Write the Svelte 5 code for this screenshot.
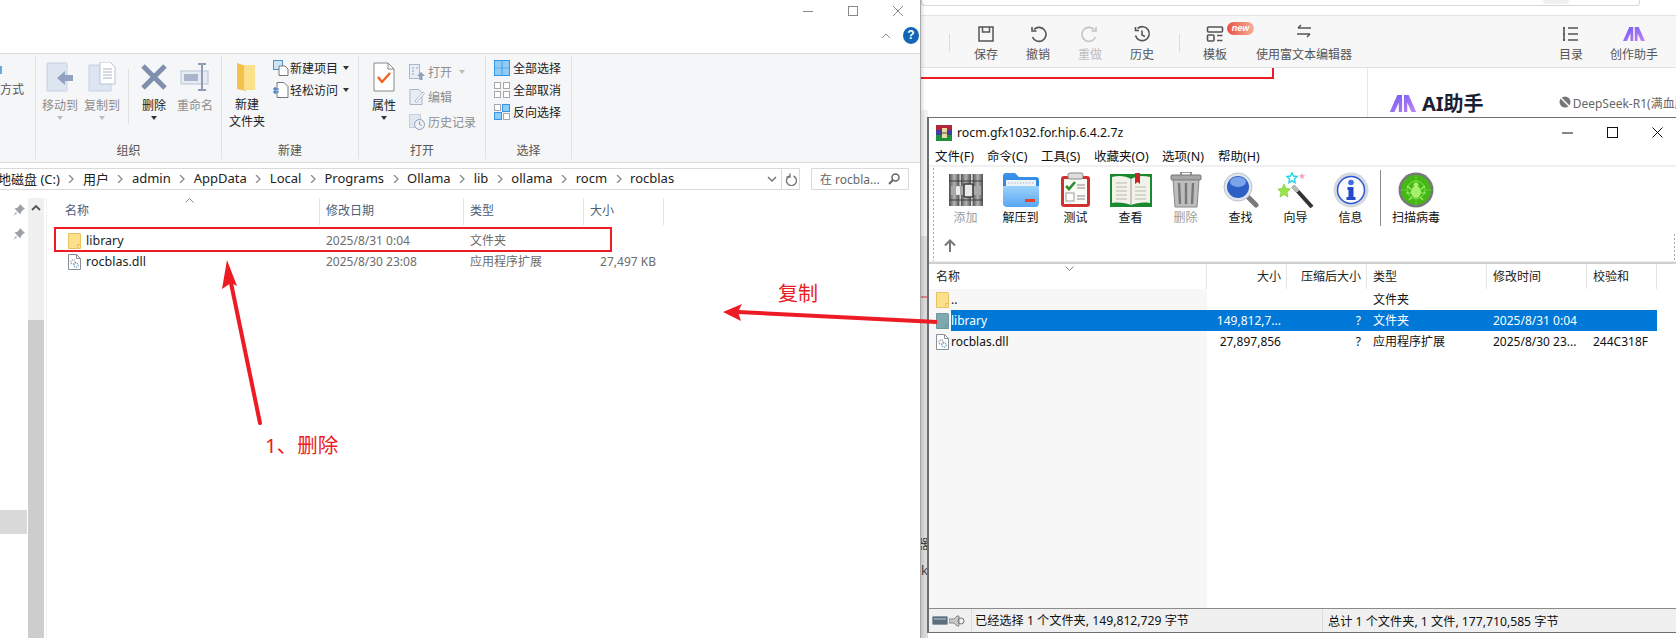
<script lang="ts">
	// Two windows over a markdown editor, with red annotation arrows on top.
	const crumbs = ['本地磁盘 (C:)', '用户', 'admin', 'AppData', 'Local', 'Programs', 'Ollama', 'lib', 'ollama', 'rocm', 'rocblas'];

	const listCols = ['名称', '修改日期', '类型', '大小'];
	const listRows = [
		{ name: 'library', date: '2025/8/31 0:04', type: '文件夹', size: '', kind: 'folder' },
		{ name: 'rocblas.dll', date: '2025/8/30 23:08', type: '应用程序扩展', size: '27,497 KB', kind: 'dll' }
	];

	const rarTools = [
		{ label: '添加', icon: 'add', off: true },
		{ label: '解压到', icon: 'extract' },
		{ label: '测试', icon: 'test' },
		{ label: '查看', icon: 'view' },
		{ label: '删除', icon: 'trash', off: true },
		{ label: '查找', icon: 'find' },
		{ label: '向导', icon: 'wizard' },
		{ label: '信息', icon: 'info' }
	];
	const rarMenu = ['文件(F)', '命令(C)', '工具(S)', '收藏夹(O)', '选项(N)', '帮助(H)'];
	const rarRows = [
		{ name: '..', size: '', packed: '', type: '文件夹', date: '', crc: '', kind: 'folder' },
		{ name: 'library', size: '149,812,7...', packed: '?', type: '文件夹', date: '2025/8/31 0:04', crc: '', kind: 'folder', selected: true },
		{ name: 'rocblas.dll', size: '27,897,856', packed: '?', type: '应用程序扩展', date: '2025/8/30 23...', crc: '244C318F', kind: 'dll' }
	];
</script>

{#snippet folderIcon(tint = false)}
	<svg class="file-ico" viewBox="0 0 13 16" width="13" height="16">
		<path d="M.5.5h11a1 1 0 0 1 1 1v14H.5z" fill={tint ? '#7fa9b0' : '#fde08c'} stroke={tint ? '#6d99a0' : '#e6c35f'} />
		<path d="M9.5 15.5v-4h3" fill="none" stroke={tint ? '#6d99a0' : '#e6c35f'} />
	</svg>
{/snippet}

{#snippet dllIcon()}
	<svg class="file-ico" viewBox="0 0 13 16" width="13" height="16">
		<path d="M.5.5h8l4 4v11H.5z" fill="#fff" stroke="#8a8f96" />
		<path d="M8.5.5v4h4" fill="none" stroke="#8a8f96" />
		<circle cx="5" cy="8" r="2.2" fill="none" stroke="#8c96a3" stroke-width="1.2" stroke-dasharray="1.2 .8" />
		<circle cx="8" cy="11" r="2.2" fill="none" stroke="#6f9fc9" stroke-width="1.2" stroke-dasharray="1.2 .8" />
	</svg>
{/snippet}

{#snippet aiMark(w, h, id)}
	<svg viewBox="0 0 28 18" width={w} height={h}>
		<defs>
			<linearGradient id={id} x1="0" y1="0" x2="1" y2="1"><stop offset="0" stop-color="#6f5cf2" /><stop offset="1" stop-color="#c284f6" /></linearGradient>
		</defs>
		<path d="M0 18L8 0h5v18H9.500V8L5 18zM28 18L20 0h-5v18h3.500V8L23 18z" fill="url(#{id})" />
	</svg>
{/snippet}

{#snippet rarIcon(name)}
	{#if name === 'add'}
		<svg viewBox="0 0 36 36" width="36" height="36">
			<defs>
				<linearGradient id="bar-grey" x1="0" y1="0" x2="1" y2="0"><stop offset="0" stop-color="#4f4f4f" /><stop offset=".5" stop-color="#b4b4b4" /><stop offset="1" stop-color="#4f4f4f" /></linearGradient>
			</defs>
			<rect x="1" y="2" width="10.500" height="32" fill="url(#bar-grey)" />
			<rect x="12.700" y="2" width="10.500" height="32" fill="url(#bar-grey)" />
			<rect x="24.500" y="2" width="10.500" height="32" fill="url(#bar-grey)" />
			<path d="M1 9h34M1 28h34" stroke="#3c3c3c" stroke-width="1.200" />
			<rect x="3" y="14" width="30" height="9" fill="#a9a9a9" />
			<rect x="16" y="12" width="9" height="13" rx="1" fill="#e9e9e9" stroke="#3f3f3f" stroke-width="1.600" />
			<rect x="8" y="14" width="4" height="9" rx="1.500" fill="#eee" />
		</svg>
	{:else if name === 'extract'}
		<svg viewBox="0 0 36 36" width="36" height="36">
			<defs>
				<linearGradient id="fold-back" x1="0" y1="0" x2="0" y2="1"><stop offset="0" stop-color="#3d94ea" /><stop offset="1" stop-color="#1c6fd0" /></linearGradient>
				<linearGradient id="fold-front" x1="0" y1="0" x2="0" y2="1"><stop offset="0" stop-color="#9cd2fb" /><stop offset="1" stop-color="#58a6f3" /></linearGradient>
			</defs>
			<path d="M0 4a3 3 0 0 1 3-3h9l4 4h17a3 3 0 0 1 3 3v24H0z" fill="url(#fold-back)" />
			<rect x="3" y="8" width="30" height="8" fill="#eef3f8" />
			<path d="M5 11h26" stroke="#a7b9cc" stroke-dasharray="1.5 1.5" />
			<path d="M0 14h36v17a4 4 0 0 1-4 4H4a4 4 0 0 1-4-4z" fill="url(#fold-front)" />
			<rect x="22" y="27" width="10" height="3" fill="#e8402f" />
		</svg>
	{:else if name === 'test'}
		<svg viewBox="0 0 36 36" width="36" height="36">
			<rect x="3" y="4" width="29" height="31" rx="3" fill="#d32f2f" />
			<rect x="6" y="7" width="23" height="25" fill="#fbfbf6" />
			<rect x="10" y="1" width="15" height="6" rx="2" fill="#ddd" stroke="#888" />
			<path d="M8 14l3 3 6-7" fill="none" stroke="#2e8b2e" stroke-width="2.6" />
			<path d="M19 13h8M19 16h8M19 24h8M19 27h8" stroke="#888" />
			<rect x="8" y="21" width="8" height="8" fill="#fff" stroke="#999" />
		</svg>
	{:else if name === 'view'}
		<svg viewBox="0 0 42 36" width="42" height="36">
			<rect x="0" y="2" width="42" height="33" fill="#1a8a2e" />
			<path d="M2 5c7-2 14-1 19 2 5-3 12-4 19-2v26c-7-1-14 0-19 2-5-2-12-3-19-2z" fill="#f2f2ea" />
			<path d="M21 7v26" stroke="#999" />
			<path d="M6 11h11M6 15h11M6 19h11M6 23h11M6 27h11M25 15h11M25 19h11M25 23h11M25 27h11" stroke="#b8b8b0" />
			<path d="M25 1h5v11l-2.500-2-2.500 2z" fill="#c8242b" />
		</svg>
	{:else if name === 'trash'}
		<svg viewBox="0 0 32 36" width="32" height="36">
			<rect x="11" y="0" width="10" height="4" fill="none" stroke="#777" stroke-width="1.500" />
			<rect x="1" y="3" width="30" height="5" rx="1" fill="#a6a6a6" stroke="#777" />
			<path d="M3 8h26l-2 27H5z" fill="#bdbdbd" stroke="#888" />
			<path d="M9 11l1 21M16 11v21M23 11l-1 21" stroke="#777" stroke-width="2.400" />
		</svg>
	{:else if name === 'find'}
		<svg viewBox="0 0 36 36" width="36" height="36">
			<path d="M23 23l10 10" stroke="#7a7a7a" stroke-width="5" stroke-linecap="round" />
			<circle cx="15" cy="15" r="14" fill="#dfe6ee" stroke="#b9c3cf" />
			<circle cx="15" cy="15" r="11" fill="#2d5fc4" />
			<ellipse cx="15" cy="10" rx="8" ry="5" fill="#7da3ea" />
		</svg>
	{:else if name === 'wizard'}
		<svg viewBox="0 0 36 36" width="36" height="36">
			<path d="M15 14l19 21" stroke="#333" stroke-width="4" />
			<path d="M15 14l5 5.500" stroke="#bbb" stroke-width="4" />
			<path d="M6 12l2 4.500 4.500.5-3.500 3 1 5-4-2.500-4 2.500 1-5-3.500-3 4.500-.5z" fill="#96e64a" stroke="#6fc326" stroke-width=".6" />
			<path d="M14 1l1.500 3 3.500.5-2.500 2.500.5 3.500-3-1.700-3 1.700.5-3.500L9 4.500l3.500-.5z" fill="#fff" stroke="#24d6ea" stroke-width="1.500" />
			<path d="M24 1l1 2 2 .2-1.500 1.600.4 2.200-1.900-1-1.900 1 .4-2.200L21 3.200l2-.2z" fill="#f7a8b3" />
		</svg>
	{:else if name === 'info'}
		<svg viewBox="0 0 36 36" width="36" height="36">
			<circle cx="18" cy="18" r="17.500" fill="#d5d9de" />
			<circle cx="18" cy="18" r="13.500" fill="#fbfcfe" stroke="#2f55d4" stroke-width="1.500" />
			<circle cx="18" cy="10.500" r="2.800" fill="#3f6fe0" />
			<path d="M14.500 15h6v10h2v3h-9v-3h2v-7h-1z" fill="#2549c8" />
		</svg>
	{:else if name === 'scan'}
		<svg viewBox="0 0 36 36" width="36" height="36">
			<circle cx="18" cy="18" r="17.500" fill="#77797c" />
			<circle cx="18" cy="18" r="15" fill="#45b815" />
			<circle cx="18" cy="18" r="9" fill="none" stroke="#7ae04a" />
			<path d="M18 3v30M3 18h30" stroke="#6fd13d" stroke-width=".8" />
			<ellipse cx="18" cy="20" rx="5" ry="6" fill="#a6f06c" />
			<circle cx="18" cy="13" r="2.500" fill="#a6f06c" />
			<path d="M13 17l-4-3M23 17l4-3M13 21H8M23 21h5M14 25l-3 3M22 25l3 3" stroke="#a6f06c" stroke-width="1.200" />
		</svg>
	{/if}
{/snippet}

<div class="desk">
	<!-- editor page behind the two windows -->
	<section class="editor">
		<div class="ed-top">
			<div class="ed-search"><span class="ed-search-btn"></span></div>
		</div>
		<div class="ed-bar">
			<span class="ed-sep first"></span>
			<button class="ed-tool">
				<svg viewBox="0 0 18 18" width="18" height="18" fill="none" stroke="#555" stroke-width="1.500"><path d="M2 2h14v14H2z" /><path d="M5.500 2v5h7V2" /></svg>
				<span>保存</span>
			</button>
			<button class="ed-tool">
				<svg viewBox="0 0 18 18" width="18" height="18" fill="none" stroke="#555" stroke-width="1.600"><path d="M5 4.500a7 7 0 1 1-1.500 7.500" /><path d="M3 2v4h4.500" /></svg>
				<span>撤销</span>
			</button>
			<button class="ed-tool off">
				<svg viewBox="0 0 18 18" width="18" height="18" fill="none" stroke="#c4c4c4" stroke-width="1.600"><path d="M13 4.500a7 7 0 1 0 1.500 7.500" /><path d="M15 2v4h-4.500" /></svg>
				<span>重做</span>
			</button>
			<button class="ed-tool">
				<svg viewBox="0 0 18 18" width="18" height="18" fill="none" stroke="#555" stroke-width="1.600"><path d="M4.500 3.500a7 7 0 1 1-2 7" /><path d="M2.500 2v3.500H6" /><path d="M9 5.500V10l3 1.500" /></svg>
				<span>历史</span>
			</button>
			<span class="ed-sep second"></span>
			<button class="ed-tool tpl">
				<svg viewBox="0 0 18 18" width="18" height="18" fill="none" stroke="#555" stroke-width="1.600"><rect x="1.500" y="2" width="15" height="5" rx="1" /><rect x="1.500" y="10" width="6.500" height="6" rx="1" /><path d="M11 10.500h5.500M11 15.500h5.500" /></svg>
				<span>模板</span>
				<em class="new-badge">new</em>
			</button>
			<button class="ed-tool rich">
				<svg viewBox="0 0 18 18" width="18" height="18" fill="none" stroke="#555" stroke-width="1.500"><path d="M3 6h13M3 6l3-3M15 12H2M15 12l-3 3" /></svg>
				<span>使用富文本编辑器</span>
			</button>
			<button class="ed-tool toc">
				<svg viewBox="0 0 18 18" width="18" height="18" fill="none" stroke="#555" stroke-width="1.600"><path d="M2 2v14M6 3h10M6 9h10M6 15h10M1 3h2M1 9h2M1 15h2" /></svg>
				<span>目录</span>
			</button>
			<button class="ed-tool helper">
				{@render aiMark(22, 18, 'ai-small')}
				<span>创作助手</span>
			</button>
		</div>
		<div class="ed-body">
			<div class="ed-main"><div class="ed-redbox"></div></div>
			<aside class="ed-side">
				{@render aiMark(28, 17, 'ai-big')}
				<strong>AI助手</strong>
				<span class="ds-ico">
					<svg viewBox="0 0 14 14" width="14" height="14"><circle cx="7" cy="7" r="5.500" fill="#777" /><path d="M3 3l8 8" stroke="#fff" stroke-width="1.500" /></svg>
				</span>
				<span class="ds-text">DeepSeek-R1(满血版)</span>
			</aside>
		</div>
		<div class="ed-strip">
			<i class="strip-red"></i>
			<span class="strip-a">器</span>
			<span class="strip-b">k</span>
		</div>
	</section>

	<!-- file explorer window -->
	<section class="explorer">
		<div class="ex-head">
			<div class="ex-winctl">
				<span><svg viewBox="0 0 10 10" width="10" height="10"><path d="M0 5.500h10" stroke="#8a8a8a" /></svg></span>
				<span><svg viewBox="0 0 10 10" width="10" height="10"><rect x=".5" y=".5" width="9" height="9" fill="none" stroke="#8a8a8a" /></svg></span>
				<span><svg viewBox="0 0 10 10" width="10" height="10"><path d="M0 0l10 10M10 0L0 10" stroke="#8a8a8a" /></svg></span>
			</div>
			<div class="ex-helprow">
				<svg viewBox="0 0 10 6" width="10" height="6"><path d="M1 5l4-4 4 4" fill="none" stroke="#888" /></svg>
				<span class="help">?</span>
			</div>
		</div>

		<div class="ribbon">
			<div class="rb-group stub">
				<div class="rb-body"><i class="rb-cut-ico"></i><span class="rb-cut">方式</span></div>
			</div>

			<div class="rb-group org">
				<div class="rb-body">
					<div class="rb-big dim">
						<svg viewBox="0 0 28 30" width="28" height="30"><path d="M1 1h20v28H1z" fill="#dde5f1" stroke="#c6d2e4" /><path d="M11 16l8-7v4h8v6h-8v4z" fill="#8fa3c1" /></svg>
						<span>移动到</span><i class="caret pale"></i>
					</div>
					<div class="rb-big dim">
						<svg viewBox="0 0 28 30" width="28" height="30"><path d="M1 3h22v26H1z" fill="#dde5f1" stroke="#c6d2e4" /><path d="M12 0h10l5 5v17H12z" fill="#fff" stroke="#b9c4d4" /><path d="M15 7h9M15 10h9M15 13h9M15 16h9" stroke="#aab4c4" /></svg>
						<span>复制到</span><i class="caret pale"></i>
					</div>
					<span class="rb-vline"></span>
					<div class="rb-big">
						<svg viewBox="0 0 28 30" width="28" height="30"><path d="M3 4l22 22M25 4L3 26" stroke="#7f8fad" stroke-width="5" /></svg>
						<span>删除</span><i class="caret"></i>
					</div>
					<div class="rb-big dim">
						<svg viewBox="0 0 30 30" width="30" height="30"><rect x="1" y="9" width="27" height="13" fill="#e7ecf4" stroke="#b7c3d6" /><rect x="4" y="12" width="14" height="7" fill="#a8b5cb" /><path d="M22 3v24M18 2h8M18 28h8" stroke="#8d9bb3" stroke-width="2" /></svg>
						<span>重命名</span>
					</div>
				</div>
				<div class="rb-label">组织</div>
			</div>

			<div class="rb-group create">
				<div class="rb-body">
					<div class="rb-big two">
						<svg viewBox="0 0 22 30" width="22" height="30"><path d="M1 1l9 3v25l-9-2z" fill="#f2c24b" /><path d="M8 3h11v24l2 1H8z" fill="#fde08c" /></svg>
						<span>新建<br />文件夹</span>
					</div>
					<div class="rb-list tight">
						<div class="rb-row">
							<svg viewBox="0 0 16 16" width="16" height="16"><rect x=".5" y=".5" width="9" height="9" fill="#cfe4f7" stroke="#4c8fc9" /><path d="M6 6h6l3 3v6.500H6z" fill="#fff" stroke="#777" /></svg>
							<span>新建项目</span><i class="caret"></i>
						</div>
						<div class="rb-row">
							<svg viewBox="0 0 16 16" width="16" height="16"><path d="M4 .5h7l4 4v11H4z" fill="#fff" stroke="#777" /><path d="M0 7h6M0 10h6M2 5v7" stroke="#2472c8" stroke-width="1.200" /></svg>
							<span>轻松访问</span><i class="caret"></i>
						</div>
					</div>
				</div>
				<div class="rb-label">新建</div>
			</div>

			<div class="rb-group open">
				<div class="rb-body">
					<div class="rb-big">
						<svg viewBox="0 0 22 30" width="22" height="30"><path d="M1 1h14l6 6v22H1z" fill="#fff" stroke="#888" /><path d="M15 1v6h6" fill="none" stroke="#888" /><path d="M5 15l4 5 8-9" fill="none" stroke="#f0641e" stroke-width="2.400" /></svg>
						<span>属性</span><i class="caret"></i>
					</div>
					<div class="rb-list wide">
						<div class="rb-row dim">
							<svg viewBox="0 0 16 16" width="16" height="16"><rect x=".5" y=".5" width="10" height="14" fill="#e9eef6" stroke="#a9b7cc" /><path d="M3 4h2M3 7h2M3 10h2M7 4h2" stroke="#8fa0ba" /><path d="M12 8l4 4h-2.500v4h-3v-4H8z" fill="#8fa0ba" /></svg>
							<span>打开</span><i class="caret pale"></i>
						</div>
						<div class="rb-row dim">
							<svg viewBox="0 0 16 16" width="16" height="16"><path d="M1 .5h9l3 3v12H1z" fill="#e9eef6" stroke="#a9b7cc" /><path d="M6 12l8-9 1.500 1.500-8 9z" fill="#fff" stroke="#a9b7cc" /></svg>
							<span>编辑</span>
						</div>
						<div class="rb-row dim">
							<svg viewBox="0 0 16 16" width="16" height="16"><rect x=".5" y=".5" width="11" height="13" fill="#e1e7f1" stroke="#c3cede" /><circle cx="10.500" cy="10.500" r="5" fill="#eef1f6" stroke="#8e9db3" /><path d="M10.500 7.500v3l2 1" fill="none" stroke="#7f8ea5" /></svg>
							<span>历史记录</span>
						</div>
					</div>
				</div>
				<div class="rb-label">打开</div>
			</div>

			<div class="rb-group pick">
				<div class="rb-body">
					<div class="rb-list tight">
						<div class="rb-row">
							<svg viewBox="0 0 16 16" width="16" height="16"><rect x=".5" y=".5" width="15" height="15" fill="#fff" stroke="#2f96e8" /><path d="M1 1h6.500v6.500H1zM8.500 1H15v6.500H8.500zM1 8.500h6.500V15H1zM8.500 8.500H15V15H8.500z" fill="#8fcdf8" /><path d="M8 0v16M0 8h16" stroke="#2f96e8" stroke-width="1.200" /></svg>
							<span>全部选择</span>
						</div>
						<div class="rb-row">
							<svg viewBox="0 0 16 16" width="16" height="16" fill="#fff" stroke="#a7a7a7"><rect x=".5" y=".5" width="6" height="6" /><rect x="9.500" y=".5" width="6" height="6" /><rect x=".5" y="9.500" width="6" height="6" /><rect x="9.500" y="9.500" width="6" height="6" /></svg>
							<span>全部取消</span>
						</div>
						<div class="rb-row">
							<svg viewBox="0 0 16 16" width="16" height="16"><g fill="#fff" stroke="#a7a7a7"><rect x=".5" y=".5" width="6" height="6" /><rect x="9.500" y="9.500" width="6" height="6" /></g><g fill="#8fcdf8" stroke="#2f96e8"><rect x="8.500" y=".5" width="7" height="7" /><rect x=".5" y="8.500" width="7" height="7" /></g></svg>
							<span>反向选择</span>
						</div>
					</div>
				</div>
				<div class="rb-label">选择</div>
			</div>
		</div>

		<div class="addr-row">
			<div class="addr">
				<div class="crumbs">
					{#each crumbs as crumb, i}
						{#if i > 0}<svg class="crumb-sep" viewBox="0 0 6 8" width="6" height="8"><path d="M1 0l4 4-4 4" fill="none" stroke="#8a8a8a" stroke-width="1.300" /></svg>{/if}
						<span>{crumb}</span>
					{/each}
				</div>
				<svg class="addr-drop" viewBox="0 0 10 6" width="10" height="6"><path d="M1 1l4 4 4-4" fill="none" stroke="#777" stroke-width="1.500" /></svg>
				<span class="addr-refresh">
					<svg viewBox="0 0 12 13" width="12" height="13" fill="none" stroke="#777" stroke-width="1.400"><path d="M8.500 3a5 5 0 1 1-4 0" /><path d="M5 .5v3.500H1.500" /></svg>
				</span>
			</div>
			<div class="addr-search">
				<span>在 rocbla...</span>
				<svg viewBox="0 0 12 12" width="12" height="12" fill="none" stroke="#666" stroke-width="1.500"><circle cx="7.500" cy="4.500" r="3.500" /><path d="M5 7l-4 4" stroke-width="2" /></svg>
			</div>
		</div>

		<div class="ex-main">
			<div class="nav">
				<div class="pins">
					{#each [0, 1] as pin (pin)}
						<svg viewBox="0 0 12 12" width="12" height="12"><path d="M7 0l5 5-1.500.5L8 8l-.5 2.500-6-6L4 4 6.500 1.500zM3 8l-3 4 4-3z" fill="#9aa0a6" /></svg>
					{/each}
				</div>
				<div class="nav-sel"></div>
			</div>
			<div class="nav-scroll">
				<span class="nav-up"><svg viewBox="0 0 10 6" width="10" height="6"><path d="M1 5l4-4 4 4" fill="none" stroke="#555" stroke-width="1.800" /></svg></span>
				<span class="nav-thumb"></span>
			</div>
			<div class="list">
				<div class="list-head">
					{#each listCols as col (col)}<span>{col}</span>{/each}
					<svg class="sort-up" viewBox="0 0 9 5" width="9" height="5"><path d="M.5 4.500l4-4 4 4" fill="none" stroke="#888" /></svg>
				</div>
				{#each listRows as row (row.name)}
					<div class="list-row">
						<span class="l-name">
							{#if row.kind === 'folder'}{@render folderIcon()}{:else}{@render dllIcon()}{/if}
							{row.name}
						</span>
						<span>{row.date}</span>
						<span>{row.type}</span>
						<span class="l-size">{row.size}</span>
					</div>
				{/each}
			</div>
		</div>
	</section>

	<!-- WinRAR window -->
	<section class="rar">
		<div class="rar-title">
			<svg viewBox="0 0 16 16" width="16" height="16">
				<rect width="16" height="5" fill="#b3263a" /><rect y="5" width="16" height="5" fill="#3f3f9e" /><rect y="10" width="16" height="6" fill="#1f8f3c" />
				<rect x="6" y="3" width="5" height="10" fill="#e9d9a8" /><path d="M6 8h5" stroke="#6b4d1d" />
			</svg>
			<span class="rar-name">rocm.gfx1032.for.hip.6.4.2.7z</span>
			<div class="rar-winctl">
				<span><svg viewBox="0 0 11 11" width="11" height="11"><path d="M0 6h11" stroke="#111" /></svg></span>
				<span><svg viewBox="0 0 11 11" width="11" height="11"><rect x=".5" y=".5" width="10" height="10" fill="none" stroke="#111" /></svg></span>
				<span><svg viewBox="0 0 11 11" width="11" height="11"><path d="M.5.500l10 10M10.500.500l-10 10" stroke="#111" /></svg></span>
			</div>
		</div>
		<div class="rar-menu">
			{#each rarMenu as item (item)}<span>{item}</span>{/each}
		</div>
		<div class="rar-toolbar">
			<div class="rar-tools">
				{#each rarTools as tool (tool.label)}
					<div class="rar-tool" class:off={tool.off}>
						<div class="rar-ico">{@render rarIcon(tool.icon)}</div>
						<span>{tool.label}</span>
					</div>
				{/each}
				<span class="rar-vsep"></span>
				<div class="rar-tool scan">
					<div class="rar-ico">{@render rarIcon('scan')}</div>
					<span>扫描病毒</span>
				</div>
			</div>
			<svg class="rar-up" viewBox="0 0 12 13" width="12" height="13"><path d="M6 13V2M1 6.500l5-5 5 5" fill="none" stroke="#777" stroke-width="2" /></svg>
		</div>
		<div class="rar-table">
			<div class="rar-namebg"></div>
			<div class="rar-head">
				<span class="c-name">名称</span>
				<span class="c-size">大小</span>
				<span class="c-packed">压缩后大小</span>
				<span class="c-type">类型</span>
				<span class="c-date">修改时间</span>
				<span class="c-crc">校验和</span>
				<svg class="rar-sort" viewBox="0 0 9 5" width="9" height="5"><path d="M.5.500l4 4 4-4" fill="none" stroke="#888" /></svg>
			</div>
			{#each rarRows as row (row.name)}
				<div class="rar-row" class:selected={row.selected}>
					<span class="r-ico">
						{#if row.kind === 'folder'}{@render folderIcon(row.selected)}{:else}{@render dllIcon()}{/if}
					</span>
					<span class="r-name">{row.name}</span>
					<span class="r-size">{row.size}</span>
					<span class="r-packed">{row.packed}</span>
					<span class="r-type">{row.type}</span>
					<span class="r-date">{row.date}</span>
					<span class="r-crc">{row.crc}</span>
				</div>
			{/each}
		</div>
		<div class="rar-status">
			<span class="st-icons">
				<svg viewBox="0 0 16 9" width="16" height="9"><rect x=".5" y=".5" width="15" height="8" rx="1" fill="#5c6f80" stroke="#8b9aa6" /><path d="M2 3h12" stroke="#c4ced6" /></svg>
				<svg viewBox="0 0 16 12" width="16" height="12"><path d="M0 4h5l3-3h2v10H8L5 8H0z" fill="#c9c9c9" stroke="#777" stroke-width=".8" /><circle cx="12" cy="6" r="3" fill="none" stroke="#777" /></svg>
			</span>
			<span class="st-left">已经选择 1 个文件夹, 149,812,729 字节</span>
			<span class="st-right">总计 1 个文件夹, 1 文件, 177,710,585 字节</span>
		</div>
	</section>

	<!-- red annotations -->
	<svg class="marks" viewBox="0 0 1676 638" width="1676" height="638">
		<rect x="55" y="228" width="556" height="23" fill="none" stroke="#ed1c24" stroke-width="2" />
		<path d="M260 423L231 283" stroke="#ed1c24" stroke-width="4" stroke-linecap="round" />
		<path d="M227 260L237 286 231 283 222 289z" fill="#ed1c24" />
		<path d="M937 322L738 312" stroke="#ed1c24" stroke-width="4" />
		<path d="M723 312L742 304 738 312 741 321z" fill="#ed1c24" />
	</svg>
	<span class="note note-del">1、删除</span>
	<span class="note note-copy">复制</span>
</div>

<style>
	:global(body) {
		margin: 0;
		background: #fff;
	}
	.desk {
		position: relative;
		width: 1676px;
		height: 638px;
		overflow: hidden;
		background: #fff;
		font-family: "Noto Sans", "Noto Sans CJK SC", sans-serif;
		font-size: 12px;
		color: #222;
	}
	button {
		font: inherit;
		background: none;
		border: 0;
		padding: 0;
	}

	/* editor */
	.editor {
		position: absolute;
		inset: 0 0 0 921px;
		display: flex;
		flex-direction: column;
	}
	.ed-top {
		height: 16px;
		box-sizing: border-box;
		border-bottom: 1px solid #e2e2e2;
		background: #fff;
	}
	.ed-search {
		width: 719px;
		height: 6px;
		box-sizing: border-box;
		border: 1px solid #d8d8d8;
		border-top: 0;
		border-radius: 0 0 4px 4px;
		display: flex;
		justify-content: flex-end;
		padding-right: 70px;
	}
	.ed-search-btn {
		width: 26px;
		height: 4px;
		background: #f0f0f0;
		border-radius: 0 0 4px 4px;
	}
	.ed-bar {
		height: 52px;
		box-sizing: border-box;
		background: #f7f7f8;
		border-bottom: 1px solid #e2e2e2;
		display: flex;
		align-items: flex-start;
		flex: none;
	}
	.ed-sep {
		width: 1px;
		height: 18px;
		margin-top: 18px;
		background: #dcdcdc;
		flex: none;
	}
	.ed-sep.first { margin-left: 28px; margin-right: 10px; }
	.ed-sep.second { margin-left: 11px; margin-right: 9px; }
	.ed-tool {
		position: relative;
		width: 52px;
		flex: none;
		padding-top: 9px;
		display: flex;
		flex-direction: column;
		align-items: center;
		gap: 3px;
		color: #555;
		font-size: 12px;
		line-height: 17px;
	}
	.ed-tool.off { color: #bdbdbd; }
	.ed-tool.rich { width: 96px; margin-left: 15px; padding-top: 6px; }
	.ed-tool.rich span { margin-top: 3px; }
	.ed-tool.toc { margin-left: auto; }
	.ed-tool.helper { width: 60px; margin: 0 12px 0 7px; }
	.new-badge {
		position: absolute;
		left: 38px;
		top: 6px;
		width: 27px;
		height: 13px;
		border-radius: 7px;
		background: linear-gradient(90deg, #e8533f, #f4b09a);
		color: #fff;
		font: italic 700 9px/13px "Liberation Sans", sans-serif;
		text-align: center;
	}
	.ed-body {
		flex: 1;
		display: flex;
	}
	.ed-main {
		width: 446px;
		flex: none;
	}
	.ed-redbox {
		width: 353px;
		height: 11px;
		box-sizing: border-box;
		border-right: 2px solid #ed1c24;
		border-bottom: 2px solid #ed1c24;
	}
	.ed-side {
		flex: 1;
		border-left: 1px solid #e6e6e6;
		height: 49px;
		box-sizing: border-box;
		padding: 27px 0 0 21px;
		display: flex;
		align-items: flex-start;
		white-space: nowrap;
	}
	.ed-side strong {
		margin-left: 5px;
		font-size: 20px;
		line-height: 18px;
		font-weight: 700;
		color: #1c1f33;
	}
	.ds-ico { margin-left: 74px; }
	.ds-text {
		margin-left: 1px;
		font-size: 12px;
		line-height: 18px;
		color: #666;
	}
	.ed-strip {
		position: absolute;
		left: 0;
		top: 110px;
		bottom: 0;
		width: 7px;
		overflow: hidden;
		background: linear-gradient(#f1f1f1 126px, #dcdcdc 126px);
		font-size: 13px;
		line-height: 16px;
		color: #444;
		display: flex;
		flex-direction: column;
	}
	.strip-red {
		height: 2px;
		margin-top: 186px;
		background: #e0808a;
		flex: none;
	}
	.strip-a { margin-top: 237px; margin-left: -5px; }
	.strip-b { margin-top: 11px; }

	/* explorer */
	.explorer {
		position: absolute;
		left: 0;
		top: 0;
		width: 921px;
		height: 638px;
		box-sizing: border-box;
		border-right: 1px solid #a9a9a9;
		background: #fff;
		display: flex;
		flex-direction: column;
		box-shadow: 2px 0 3px rgba(0, 0, 0, 0.12);
	}
	.ex-head {
		height: 53px;
		flex: none;
	}
	.ex-winctl {
		height: 22px;
		display: flex;
		justify-content: flex-end;
	}
	.ex-winctl span {
		width: 45px;
		display: flex;
		align-items: center;
		justify-content: center;
	}
	.ex-helprow {
		height: 31px;
		display: flex;
		justify-content: flex-end;
		align-items: center;
		gap: 12px;
		padding: 0 0 4px;
		margin-right: 1px;
		box-sizing: border-box;
	}
	.help {
		width: 16px;
		height: 17px;
		border-radius: 50%;
		background: #1466b4;
		color: #fff;
		font: 700 12px/17px "Liberation Sans", sans-serif;
		text-align: center;
	}
	.ribbon {
		height: 110px;
		flex: none;
		box-sizing: border-box;
		background: #f5f6f7;
		border-top: 1px solid #dadbdc;
		border-bottom: 1px solid #dadbdc;
		display: flex;
		padding: 2px 0 3px;
	}
	.rb-group {
		flex: none;
		box-sizing: border-box;
		border-right: 1px solid #e1e2e3;
		display: flex;
		flex-direction: column;
	}
	.rb-group.stub { width: 36px; }
	.rb-group.org { width: 186px; }
	.rb-group.create { width: 137px; }
	.rb-group.open { width: 127px; }
	.rb-group.pick { width: 86px; }
	.rb-body {
		flex: 1;
		display: flex;
		align-items: flex-start;
		min-height: 0;
	}
	.stub .rb-body { flex-direction: column; }
	.rb-cut-ico {
		width: 2px;
		height: 8px;
		margin-top: 10px;
		background: #6ba7dc;
	}
	.rb-cut {
		margin-top: 8px;
		color: #555;
		font-size: 12px;
		line-height: 16px;
	}
	.rb-label {
		height: 18px;
		line-height: 20px;
		text-align: center;
		color: #555;
		font-size: 12px;
	}
	.rb-big {
		width: 42px;
		flex: none;
		display: flex;
		flex-direction: column;
		align-items: center;
		padding-top: 6px;
		line-height: 17px;
		color: #222;
		text-align: center;
	}
	.rb-big svg { margin-bottom: 5px; }
	.rb-big.dim, .rb-row.dim { color: #8d8d8d; }
	.rb-big .caret { margin-top: 2px; }
	.rb-big.two { margin-left: 4px; }
	.rb-big.two svg { margin-bottom: 4px; }
	.org .rb-body { padding-left: 3px; }
	.org .rb-big:last-child { margin-left: -1px; }
	.open .rb-body { padding-left: 4px; }
	.rb-vline {
		width: 1px;
		height: 55px;
		margin: 13px 4px 0 5px;
		background: #dfe0e1;
		flex: none;
	}
	.rb-list {
		display: flex;
		flex-direction: column;
	}
	.rb-list.tight { padding-top: 1px; }
	.rb-list.tight .rb-row { height: 22px; }
	.rb-list.wide { margin-left: 4px; padding-top: 3px; }
	.rb-list.wide .rb-row { height: 25px; }
	.create .rb-list { margin-left: 5px; }
	.create .rb-row { gap: 1px; }
	.pick .rb-list { margin-left: 8px; }
	.rb-row {
		display: flex;
		align-items: center;
		gap: 3px;
		white-space: nowrap;
	}
	.rb-row svg { flex: none; }
	.rb-row .caret { margin-left: 4px; }
	.caret {
		display: inline-block;
		width: 0;
		height: 0;
		border: 3px solid transparent;
		border-top: 4px solid #333;
		border-bottom: 0;
	}
	.caret.pale { border-top-color: #bcbcbc; }

	.addr-row {
		display: flex;
		height: 22px;
		margin-top: 5px;
		flex: none;
	}
	.addr {
		width: 800px;
		box-sizing: border-box;
		border: 1px solid #d9d9d9;
		border-left: 0;
		display: flex;
		align-items: center;
		overflow: hidden;
	}
	.crumbs {
		flex: 1;
		display: flex;
		align-items: center;
		gap: 8.500px;
		margin-left: -15px;
		padding-bottom: 2px;
		font-size: 13px;
		white-space: nowrap;
		color: #222;
	}
	.crumb-sep { flex: none; margin-top: 2px; }
	.addr-drop { margin-right: 4px; }
	.addr-refresh {
		width: 17px;
		height: 100%;
		border-left: 1px solid #d9d9d9;
		display: flex;
		align-items: center;
		justify-content: center;
	}
	.addr-search {
		margin-left: 11px;
		width: 98px;
		box-sizing: border-box;
		border: 1px solid #d9d9d9;
		display: flex;
		align-items: center;
		justify-content: space-between;
		padding: 0 8px;
		color: #666;
		white-space: nowrap;
		overflow: hidden;
	}
	.addr-search svg { flex: none; }
	.ex-main {
		flex: 1;
		display: flex;
		padding-top: 8px;
		min-height: 0;
	}
	.nav {
		width: 28px;
		flex: none;
		margin-top: -8px;
	}
	.pins {
		display: flex;
		flex-direction: column;
		gap: 12px;
		align-items: flex-end;
		padding: 14px 3px 0 0;
	}
	.nav-sel {
		height: 24px;
		width: 27px;
		margin-top: 270px;
		background: #d9d9d9;
	}
	.nav-scroll {
		width: 16px;
		flex: none;
		background: #f0f0f0;
		display: flex;
		flex-direction: column;
		margin-right: 2px;
	}
	.nav-up {
		height: 20px;
		display: flex;
		align-items: center;
		justify-content: center;
	}
	.nav-thumb {
		margin-top: 102px;
		flex: 1;
		background: #cdcdcd;
	}
	.list {
		position: relative;
		flex: 1;
		border-left: 1px solid #f0f0f0;
	}
	.list-head, .list-row {
		display: grid;
		grid-template-columns: 273px 144px 120px 80px;
	}
	.list-head {
		height: 27px;
		align-items: center;
		color: #4c607a;
		margin-bottom: 5px;
	}
	.list-head span {
		height: 100%;
		line-height: 25px;
		padding-left: 6px;
		border-right: 1px solid #e5e5e5;
	}
	.list-head span:first-child { padding-left: 18px; }
	.sort-up {
		position: absolute;
		left: 138px;
		top: 0;
	}
	.list-row {
		height: 21px;
		line-height: 21px;
		color: #6d6d6d;
	}
	.list-row > span { padding-left: 6px; white-space: nowrap; }
	.l-name {
		display: flex;
		align-items: center;
		gap: 5px;
		color: #1e1e1e;
		padding-left: 21px !important;
		font-size: 12.500px;
	}
	.l-size {
		padding-left: 0 !important;
		padding-right: 8px;
		text-align: right;
	}
	.file-ico { flex: none; }

	/* rar */
	.rar {
		position: absolute;
		left: 927px;
		top: 117px;
		width: 760px;
		height: 516px;
		box-sizing: border-box;
		border: 1px solid #6b6f73;
		border-left-width: 2px;
		background: #fff;
		display: flex;
		flex-direction: column;
		color: #111;
	}
	.rar-title {
		height: 29px;
		flex: none;
		display: flex;
		align-items: center;
		padding-left: 7px;
	}
	.rar-name {
		margin-left: 5px;
		font-size: 12.300px;
		color: #111;
	}
	.rar-winctl {
		margin-left: auto;
		margin-right: 23px;
		display: flex;
		gap: 34px;
	}
	.rar-winctl span { display: flex; }
	.rar-menu {
		height: 18px;
		flex: none;
		display: grid;
		grid-template-columns: 52px 54px 53px 68px 56px auto;
		justify-content: start;
		padding-left: 6px;
		font-size: 12.500px;
		line-height: 20px;
		white-space: nowrap;
	}
	.rar-toolbar {
		position: relative;
		height: 99px;
		flex: none;
		box-sizing: border-box;
		border-top: 2px solid #f0f0f0;
		border-bottom: 2px solid #d0d0d0;
		box-shadow: inset 0 -1px 0 #eee;
		padding-left: 9px;
		background-image: radial-gradient(circle, #a8a8a8 .7px, transparent .8px);
		background-size: 3px 4px;
		background-repeat: repeat-y;
		background-position: 3px 0;
	}
	.rar-toolbar::after {
		content: "";
		position: absolute;
		left: 744px;
		top: 66px;
		bottom: 0;
		width: 3px;
		background-image: radial-gradient(circle, #a8a8a8 .7px, transparent .8px);
		background-size: 3px 4px;
	}
	.rar-tools {
		display: flex;
		align-items: flex-start;
	}
	.rar-tool {
		width: 55px;
		flex: none;
		display: flex;
		flex-direction: column;
		align-items: center;
		font-size: 12px;
		line-height: 16px;
		padding-top: 4px;
	}
	.rar-tool.off { color: #9b9b9b; }
	.rar-ico {
		height: 37px;
		display: flex;
		align-items: center;
		margin-bottom: 2px;
	}
	.rar-tool.scan { width: 60px; margin-left: 5px; }
	.rar-vsep {
		width: 1px;
		height: 56px;
		margin: 3px 0 0 2px;
		background: #8a8a8a;
		flex: none;
	}
	.rar-up {
		position: absolute;
		left: 15px;
		top: 72px;
	}
	.rar-table {
		position: relative;
		flex: 1;
		min-height: 0;
	}
	.rar-namebg {
		position: absolute;
		left: 0;
		top: 25px;
		bottom: 0;
		width: 278px;
		background: #f7f7f7;
	}
	.rar-head {
		position: relative;
		display: grid;
		grid-template-columns: 278px 80px 80px 120px 100px 70px;
		height: 25px;
		line-height: 25px;
		color: #222;
		white-space: nowrap;
	}
	.rar-head span {
		border-right: 1px solid #e5e5e5;
		padding: 0 6px;
	}
	.rar-head .c-name { padding-left: 7px; }
	.rar-head .c-size, .rar-head .c-packed { text-align: right; padding-right: 5px; }
	.rar-sort {
		position: absolute;
		left: 136px;
		top: 2px;
	}
	.rar-row {
		position: relative;
		display: grid;
		grid-template-columns: 22px 256px 80px 80px 120px 100px 70px;
		height: 21px;
		line-height: 21px;
		white-space: nowrap;
	}
	.rar-row > span { min-width: 0; }
	.r-ico {
		display: flex;
		align-items: center;
		padding-left: 7px;
		background: transparent;
	}
	.r-name { padding-left: 0; }
	.r-size { text-align: right; padding-right: 6px; }
	.r-packed { text-align: right; padding-right: 6px; }
	.r-type, .r-date, .r-crc { padding-left: 6px; }
	.rar-row.selected > span:not(.r-ico) {
		background: #0078d7;
		color: #fff;
	}
	.rar-status {
		height: 24px;
		flex: none;
		box-sizing: border-box;
		border-top: 1px solid #8b8b8b;
		background: #f0f0f0;
		display: flex;
		align-items: center;
		white-space: nowrap;
		font-size: 12.200px;
	}
	.st-icons {
		width: 43px;
		height: 100%;
		box-sizing: border-box;
		border-right: 1px solid #dcdcdc;
		padding-left: 3px;
		display: flex;
		align-items: center;
		gap: 1px;
		flex: none;
	}
	.st-left {
		width: 351px;
		height: 100%;
		line-height: 23px;
		box-sizing: border-box;
		padding-left: 3px;
		border-right: 1px solid #dcdcdc;
		flex: none;
	}
	.st-right { padding-left: 5px; }

	/* annotations */
	.marks {
		position: absolute;
		left: 0;
		top: 0;
		pointer-events: none;
	}
	.note {
		position: absolute;
		color: #ed1c24;
		line-height: 26px;
		white-space: nowrap;
	}
	.note-del { left: 265px; top: 432px; font-size: 20.500px; }
	.note-copy { left: 778px; top: 281px; font-size: 20px; }
</style>
